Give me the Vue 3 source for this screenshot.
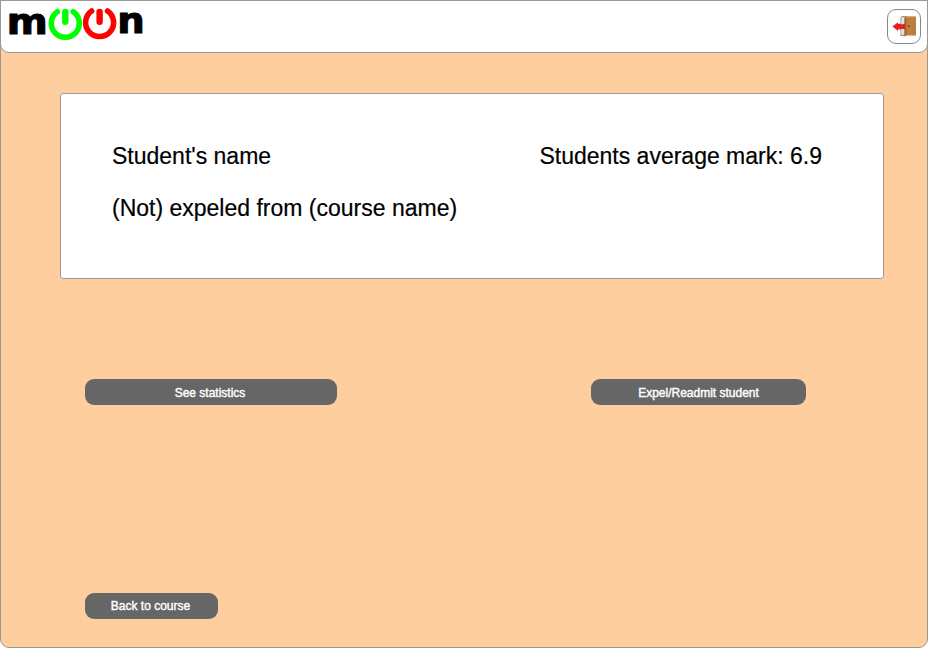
<script setup>
const status = '(Not) expeled from (course name)'
const average = 6.9
</script>

<template>
  <div class="page">
    <header class="topbar">
      <svg class="logo" width="140" height="42" viewBox="0 0 140 42" role="img">
        <text class="letter" x="-0.2" y="28" textLength="41" lengthAdjust="spacingAndGlyphs">m</text>
        <g class="power on">
          <path class="ring" d="M50.3 5.8A14 14 0 1 0 66.3 5.8" />
          <path class="bar" d="M58.3 6V15.7" />
        </g>
        <g class="power off">
          <path class="ring" d="M84.6 5A14 14 0 1 0 100.6 5" />
          <path class="bar" d="M92.6 6V15.7" />
        </g>
        <text class="letter" x="110.3" y="27.1" textLength="27.5" lengthAdjust="spacingAndGlyphs">n</text>
      </svg>
      <button class="exit">
        <svg width="24" height="21" viewBox="0 0 24 21">
          <path d="M8.5 1L10.5 0H14V20H8.5Z" fill="#aa8a72" />
          <path d="M9.3 1.2H13V18.8H9.3Z" fill="#dce5ea" />
          <path d="M12.5 2L14.5 0.5H23.5V19.5H14L12.5 20.5Z" fill="#bf803f" />
          <path d="M12.5 2L14.5 0.5V19L12.5 20.5Z" fill="#a36430" />
          <path d="M14 0.9H23.5" stroke="#d59b62" />
          <path d="M23.2 1V19.5" stroke="#a66932" />
          <circle cx="17" cy="10" r="1" fill="#6b401d" />
          <path d="M0.5 10.6L6 6.2V8.1L8 7.6L9.5 8.4L13 7.8V13.2L9.5 12.8L8 13.7L6 13.1V15Z" fill="#de2025" />
        </svg>
      </button>
    </header>
    <main class="content">
      <section class="card">
        <div class="row">
          <span>Student's name</span>
          <span>Students average mark: {{ average }}</span>
        </div>
        <div class="row">{{ status }}</div>
      </section>
      <div class="actions">
        <button class="btn stats">See statistics</button>
        <button class="btn expel">Expel/Readmit student</button>
      </div>
      <button class="btn back">Back to course</button>
    </main>
  </div>
</template>

<style>
body { background: #fff; }
</style>

<style scoped>
.page {
  box-sizing: border-box;
  width: 928px;
  height: 648px;
  display: flex;
  flex-direction: column;
  border: 1px solid #999;
  border-radius: 0 0 9px 9px;
  background: #ffce9f;
  font-family: "Liberation Sans", Arial, sans-serif;
}
.topbar {
  box-sizing: border-box;
  flex: none;
  width: 928px;
  height: 53px;
  margin: -1px;
  padding: 5px 6px 0 6px;
  display: flex;
  justify-content: space-between;
  align-items: flex-start;
  background: #fff;
  border: 1px solid #999;
  border-radius: 0 0 9px 9px;
}
.logo { overflow: visible; }
.letter {
  font: bold 36px "DejaVu Sans", sans-serif;
  fill: #000;
  stroke: #000;
  stroke-width: 1.1;
}
.power {
  fill: none;
  stroke-linecap: round;
}
.ring { stroke-width: 5.6; }
.bar { stroke-width: 6.4; }
.on { stroke: #0f0; }
.off { stroke: #f00; }
.exit {
  box-sizing: border-box;
  width: 34px;
  height: 35px;
  margin-top: 3px;
  padding: 0;
  display: flex;
  align-items: center;
  justify-content: center;
  background: #fff;
  border: 1px solid #888;
  border-radius: 9px;
}
.content {
  display: flex;
  flex-direction: column;
  align-items: flex-start;
  padding: 41px 43px 0 59px;
}
.card {
  box-sizing: border-box;
  width: 824px;
  height: 186px;
  padding: 36px 61px 0 51px;
  background: #fff;
  border: 1px solid #999;
  border-radius: 3px;
}
.row {
  display: flex;
  justify-content: space-between;
  font-size: 23px;
  line-height: 52px;
  color: #000;
  white-space: nowrap;
  -webkit-text-stroke: 0.2px #000;
}
.actions {
  display: flex;
  gap: 254px;
  margin: 100px 0 0 25px;
}
.btn {
  height: 26px;
  padding: 2px 2px 0 0;
  border: 0;
  border-radius: 9px;
  background: #666;
  color: #fff;
  font: 12px/24px "Liberation Sans", Arial, sans-serif;
  -webkit-text-stroke: 0.4px #fff;
  white-space: nowrap;
}
.stats { width: 252px; }
.expel {
  width: 215px;
  padding-right: 0;
}
.back {
  width: 133px;
  margin: 188px 0 0 25px;
  padding: 0 2px 0 0;
}
</style>
